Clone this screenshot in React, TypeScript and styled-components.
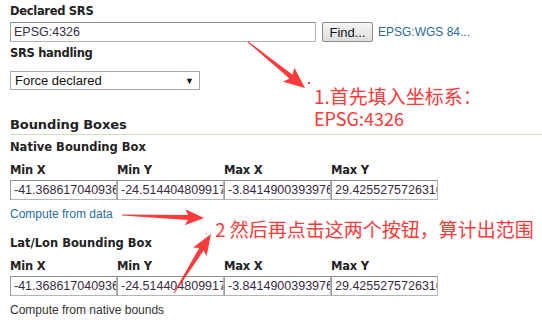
import * as React from 'react';
import styled, { createGlobalStyle } from 'styled-components';

const GlobalStyle = createGlobalStyle`
	html, body {
		margin: 0;
		padding: 0;
		background: #fff;
	}
	body {
		font-family: "Liberation Sans", Arial, sans-serif;
		color: #222;
	}
`;

const Page = styled.div`
	position: relative;
	width: 542px;
	height: 320px;
	overflow: hidden;
	padding: 0 10px;
	box-sizing: border-box;
`;

const Label = styled.div<{ $top?: number }>`
	font-family: "DejaVu Sans", Verdana, sans-serif;
	font-weight: bold;
	font-size: 11.5px;
	letter-spacing: -0.3px;
	line-height: 14px;
	height: 14px;
	color: #222;
	margin-top: ${props => props.$top ?? 0}px;
`;

const SectionTitle = styled.div`
	font-family: "DejaVu Sans", Verdana, sans-serif;
	font-weight: bold;
	font-size: 13px;
	letter-spacing: -0.1px;
	line-height: 17px;
	color: #222;
	margin-top: 26px;
	margin-right: -10px;
	padding-bottom: 1px;
	border-bottom: 1px solid #cfe0b4;
`;

const SrsRow = styled.div`
	display: flex;
	align-items: center;
	gap: 6px;
	margin-top: 4px;
	height: 20px;
`;

const TextInput = styled.div<{ $width: number }>`
	width: ${props => props.$width}px;
	height: 20px;
	box-sizing: border-box;
	border: 1px solid #b4b4b4;
	border-top-color: #8f8f8f;
	border-left-color: #9a9a9a;
	padding: 0 3px;
	font-size: 12.5px;
	line-height: 18px;
	color: #3a2c44;
	white-space: nowrap;
	overflow: hidden;
	background: #fff;
`;

const FindButton = styled.button`
	height: 20px;
	width: 51px;
	padding: 0;
	border: 1px solid #8c8c8c;
	border-radius: 2px;
	background: linear-gradient(#f6f6f6, #dedede);
	font-family: "Liberation Sans", Arial, sans-serif;
	font-size: 13px;
	color: #111;
`;

const Link = styled.span`
	font-size: 12px;
	color: #2a6c9c;
	margin-left: -1px;
`;

const Select = styled.div`
	margin-top: 11px;
	width: 190px;
	height: 19px;
	box-sizing: border-box;
	border: 1px solid #a9a9a9;
	display: flex;
	align-items: center;
	justify-content: space-between;
	padding: 0 5px 0 4px;
	font-size: 13px;
	color: #111;
`;

const Caret = styled.span`
	font-size: 9px;
	color: #111;
`;

const SubTitle = styled.div<{ $top: number }>`
	font-family: "DejaVu Sans", Verdana, sans-serif;
	font-weight: bold;
	font-size: 11.5px;
	line-height: 14px;
	color: #222;
	margin-top: ${props => props.$top}px;
`;

const CoordGrid = styled.div`
	display: grid;
	grid-template-columns: repeat(4, 107px);
	margin-top: 9px;
	row-gap: 3px;
`;

const CoordLabel = styled.div`
	font-family: "DejaVu Sans", Verdana, sans-serif;
	font-weight: bold;
	font-size: 11.5px;
	letter-spacing: -0.2px;
	line-height: 14px;
	color: #222;
`;

const ActionLink = styled.div<{ $plain?: boolean }>`
	margin-top: 7px;
	font-size: 12px;
	line-height: 14px;
	color: ${props => (props.$plain ? '#333' : '#2a6c9c')};
`;

const Overlay = styled.svg`
	position: absolute;
	left: 0;
	top: 0;
	pointer-events: none;
`;

const Note = styled.div<{ $x: number; $y: number; $size: number }>`
	position: absolute;
	left: ${props => props.$x}px;
	top: ${props => props.$y}px;
	font-family: "Noto Sans CJK SC", "Noto Sans", sans-serif;
	font-size: ${props => props.$size}px;
	line-height: 20px;
	height: 20px;
	color: #ff3838;
	white-space: nowrap;
`;

function arrow(x1: number, y1: number, x2: number, y2: number, head: number, half: number, shaft: number) {
	const len = Math.hypot(x2 - x1, y2 - y1);
	const ux = (x2 - x1) / len;
	const uy = (y2 - y1) / len;
	const nx = -uy;
	const ny = ux;
	const bx = x2 - ux * head;
	const by = y2 - uy * head;
	const pts = [
		[x1 - nx * 0.5, y1 - ny * 0.5],
		[bx - nx * shaft, by - ny * shaft],
		[bx - ux * 3 - nx * half, by - uy * 3 - ny * half],
		[x2, y2],
		[bx - ux * 3 + nx * half, by - uy * 3 + ny * half],
		[bx + nx * shaft, by + ny * shaft],
		[x1 + nx * 0.5, y1 + ny * 0.5],
	];
	return pts.map(p => p[0].toFixed(1) + ',' + p[1].toFixed(1)).join(' ');
}

const coords = ['-41.368617040936', '-24.514404809917', '-3.8414900393976', '29.4255275726316'];
const heads = ['Min X', 'Min Y', 'Max X', 'Max Y'];

const Coords = () => (
	<CoordGrid>
		{heads.map(h => <CoordLabel key={h}>{h}</CoordLabel>)}
		{coords.map(c => <TextInput key={c} $width={107}>{c}</TextInput>)}
	</CoordGrid>
);

export default function App() {
	return (
		<Page>
			<GlobalStyle />
			<Label $top={4}>Declared SRS</Label>
			<SrsRow>
				<TextInput $width={306}>EPSG:4326</TextInput>
				<FindButton>Find...</FindButton>
				<Link>EPSG:WGS 84...</Link>
			</SrsRow>
			<Label $top={4}>SRS handling</Label>
			<Select>
				<span>Force declared</span>
				<Caret>▼</Caret>
			</Select>
			<SectionTitle>Bounding Boxes</SectionTitle>
			<SubTitle $top={5}>Native Bounding Box</SubTitle>
			<Coords />
			<ActionLink>Compute from data</ActionLink>
			<SubTitle $top={15}>Lat/Lon Bounding Box</SubTitle>
			<Coords />
			<ActionLink $plain>Compute from native bounds</ActionLink>

			<Overlay width={542} height={320}>
				<polygon points={arrow(248, 42, 305, 88, 18, 9, 2.5)} fill="#ff3a3a" />
				<polygon points={arrow(122, 215, 204, 218, 16, 8, 2.5)} fill="#ff3a3a" />
				<polygon points={arrow(174, 293, 211, 234, 18, 8, 2.5)} fill="#ff3a3a" />
				<rect x={308} y={82} width={2} height={2} fill="#ff3a3a" />
				<rect x={206} y={233} width={1} height={1} fill="#ff3a3a" />
			</Overlay>
			<Note $x={314} $y={86} $size={19}>1.首先填入坐标系：</Note>
			<Note $x={314} $y={108} $size={18}>EPSG:4326</Note>
			<Note $x={215} $y={219} $size={19}>2 然后再点击这两个按钮，算计出范围</Note>
		</Page>
	);
}
